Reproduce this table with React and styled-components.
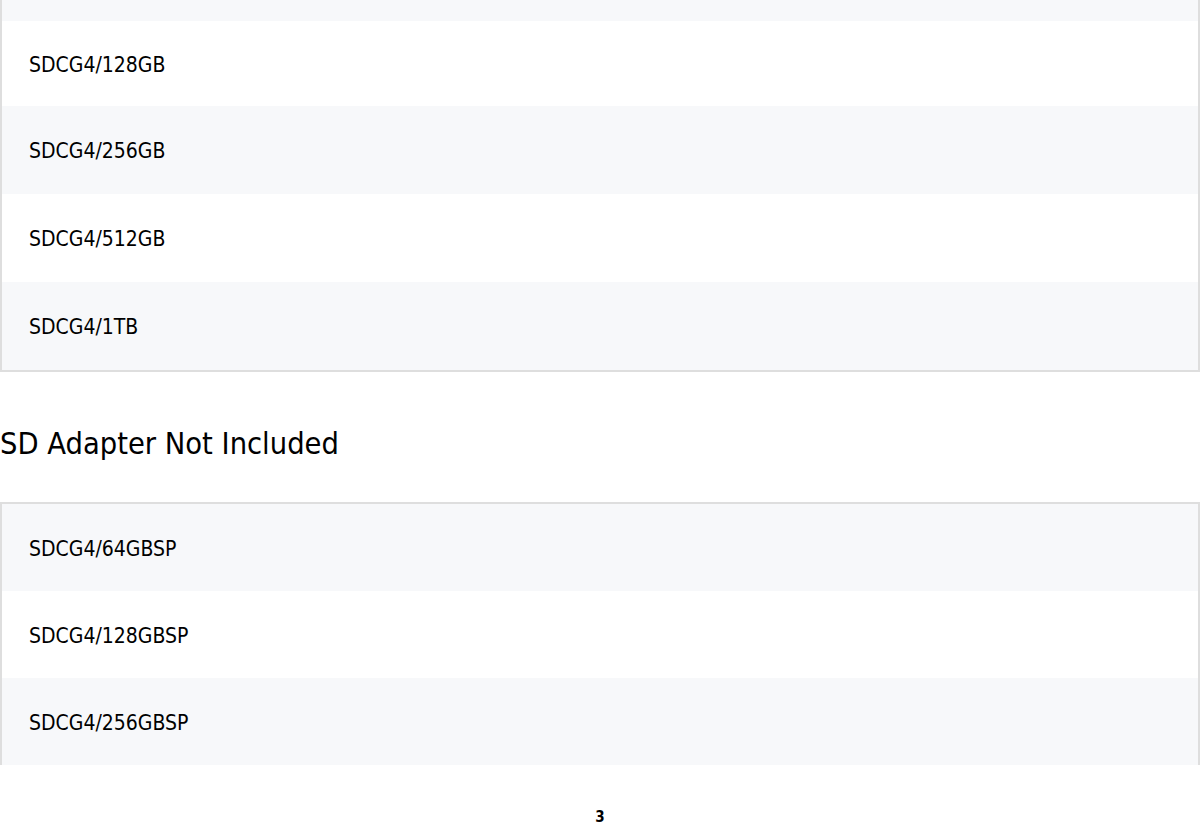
import React from 'react';
import styled, { createGlobalStyle } from 'styled-components';

const GlobalStyle = createGlobalStyle`
  body {
    margin: 0;
    background: #fff;
    font-family: "DejaVu Sans", Tahoma, sans-serif;
    font-stretch: condensed;
    color: #000;
  }
`;

const Page = styled.div`
  width: 1200px;
  height: 825px;
  overflow: hidden;
  display: flex;
  flex-direction: column;
`;

const Content = styled.div`
  flex: 1;
  overflow: hidden;
`;

const Table = styled.div`
  border: 2px solid #dedede;
  border-top: ${p => (p.$cutTop ? 'none' : '2px solid #dedede')};
  border-bottom: ${p => (p.$cutBottom ? 'none' : '2px solid #dedede')};
`;

const Row = styled.div`
  height: ${p => p.$h || 87}px;
  box-sizing: border-box;
  padding-top: 2px;
  display: flex;
  align-items: center;
  padding-left: 27px;
  background: ${p => (p.$alt ? '#f7f8fa' : '#fff')};
  font-size: 21px;
`;

const Heading = styled.h2`
  margin: 0;
  height: 130px;
  box-sizing: border-box;
  padding-top: 12px;
  display: flex;
  align-items: center;
  font-weight: normal;
  font-size: 30.5px;
`;

const Footer = styled.div`
  height: 60px;
  box-sizing: border-box;
  padding-top: 44px;
  text-align: center;
  font-weight: bold;
  font-size: 15px;
  line-height: 16px;
`;

const first = ['SDCG4/128GB', 'SDCG4/256GB', 'SDCG4/512GB', 'SDCG4/1TB'];
const second = ['SDCG4/64GBSP', 'SDCG4/128GBSP', 'SDCG4/256GBSP'];

export default function App() {
  return (
    <>
      <GlobalStyle />
      <Page>
        <Content>
          <Table $cutTop>
            <Row $alt $h={21} />
            {first.map((t, i) => (
              <Row key={t} $alt={i % 2 === 1} $h={i === 0 ? 85 : 88}>{t}</Row>
            ))}
          </Table>
          <Heading>SD Adapter Not Included</Heading>
          <Table $cutBottom>
            {second.map((t, i) => (
              <Row key={t} $alt={i % 2 === 0} $h={87}>{t}</Row>
            ))}
          </Table>
        </Content>
        <Footer>3</Footer>
      </Page>
    </>
  );
}
